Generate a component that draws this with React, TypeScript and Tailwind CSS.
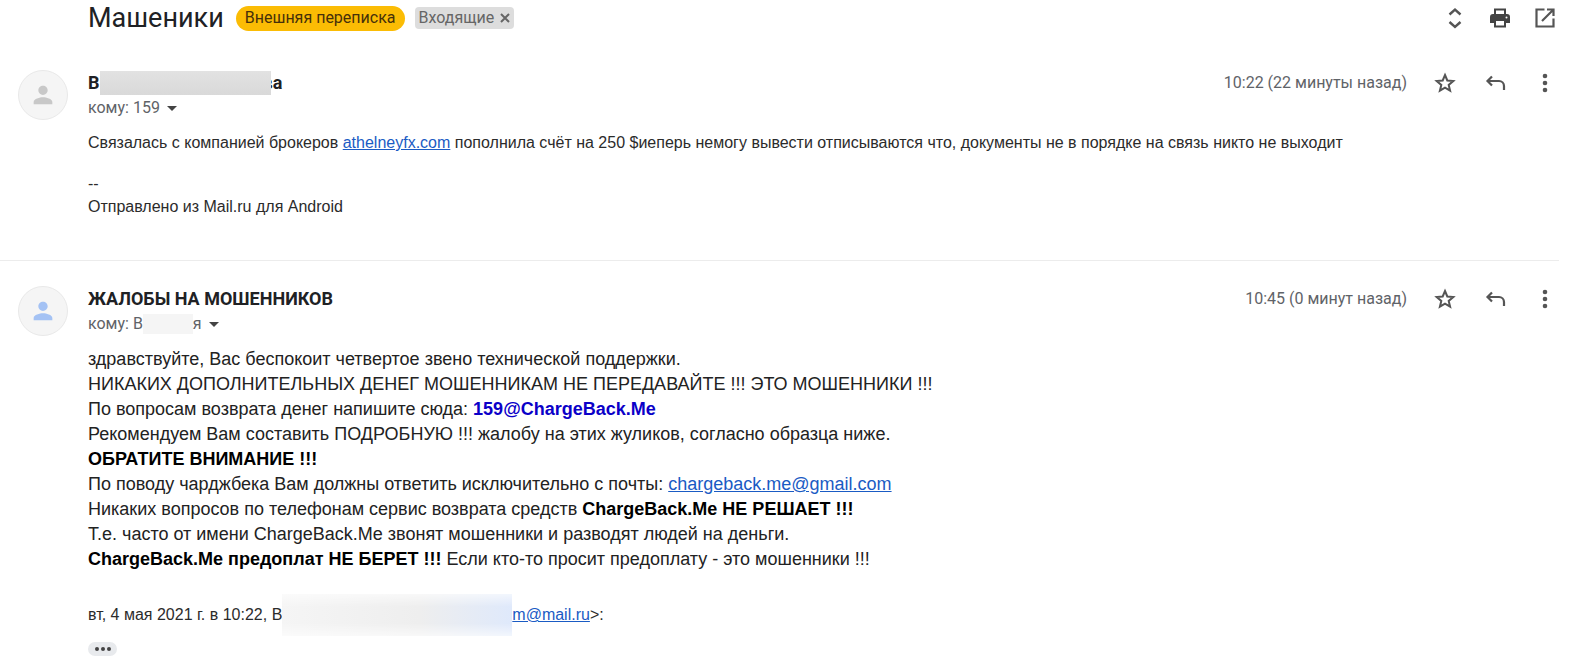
import type { ReactNode } from 'react'
import { MdArrowDropDown, MdPerson } from 'react-icons/md'

function ExpandIcon() {
  return (
    <svg viewBox="0 0 24 24" className="h-6 w-6" fill="none" stroke="currentColor" strokeWidth="2.4">
      <path d="m6.500 8.500 5.500-5 5.500 5M6.500 16l5.500 5 5.500-5" />
    </svg>
  )
}

function PrintIcon() {
  return (
    <svg viewBox="0 0 24 24" className="h-6 w-6 text-[#444]" fill="currentColor">
      <path
        fillRule="evenodd"
        d="M6 2.500h12V8h1a3 3 0 0 1 3 3v6h-4v4.500H6V17H2v-6a3 3 0 0 1 3-3h1V2.500Zm2 2V8h8V4.500H8ZM8 15v4.500h8V15H8Z"
      />
      <circle cx="18.500" cy="11.500" r="1" fill="#fff" />
    </svg>
  )
}

function OpenIcon() {
  return (
    <svg viewBox="0 0 24 24" className="h-6 w-6" fill="none" stroke="currentColor" strokeWidth="2.200">
      <path d="M11.500 3.500h-8v17h17v-8M14 3.500h6.500V10M20 4 9 15" />
    </svg>
  )
}

function StarIcon() {
  return (
    <svg viewBox="0 0 24 24" className="h-6 w-6" fill="none" stroke="currentColor" strokeWidth="2">
      <path d="m12 4 2.300 5.500 6 .5-4.600 3.900 1.400 5.800L12 16.600l-5.100 3.100 1.400-5.800L3.700 10l6-.5L12 4Z" />
    </svg>
  )
}

function ReplyIcon() {
  return (
    <svg viewBox="0 0 24 24" className="h-6 w-6" fill="none" stroke="currentColor" strokeWidth="2.200">
      <path d="M9 5.500 4.500 10 9 14.500M4.500 10H16a5 5 0 0 1 5 5v4" />
    </svg>
  )
}

function MoreIcon() {
  return (
    <svg viewBox="0 0 24 24" className="h-6 w-6" fill="currentColor">
      <circle cx="12" cy="5" r="2.300" />
      <circle cx="12" cy="12" r="2.300" />
      <circle cx="12" cy="19" r="2.300" />
    </svg>
  )
}

function IconButton({ label, children }: { label: string; children: ReactNode }) {
  return (
    <button type="button" aria-label={label} className="flex h-6 w-6 items-center justify-center text-[#555]">
      {children}
    </button>
  )
}

type MessageProps = {
  sender: ReactNode
  recipient: ReactNode
  time: string
  avatarClass: string
  children: ReactNode
}

function Message({ sender, recipient, time, avatarClass, children }: MessageProps) {
  return (
    <article className="flex pl-[18px]">
      <div className="flex h-[50px] w-[50px] shrink-0 items-center justify-center rounded-full border border-[#e9e9e9] bg-[#f5f5f5]">
        <MdPerson className={avatarClass} />
      </div>
      <div className="ml-5 min-w-0 flex-1">
        <div className="flex h-[26px] items-center justify-between pr-[19px]">
          <h2 className="flex items-center text-lg leading-6 font-bold text-[#202124]">{sender}</h2>
          <div className="flex items-center">
            <span className="mr-[26px] text-base text-[#5f6368]">{time}</span>
            <div className="flex gap-[26px]">
              <IconButton label="Пометить">
                <StarIcon />
              </IconButton>
              <IconButton label="Ответить">
                <ReplyIcon />
              </IconButton>
              <IconButton label="Ещё">
                <MoreIcon />
              </IconButton>
            </div>
          </div>
        </div>
        <button type="button" className="flex h-6 items-center text-base text-[#5f6368]">
          {recipient}
          <MdArrowDropDown size={24} className="text-[#444]" />
        </button>
        {children}
      </div>
    </article>
  )
}

export default function App() {
  return (
    <main className="min-h-screen bg-white pb-2 font-['Roboto',sans-serif]">
      <header className="flex h-9 items-center justify-between pr-[19px] pl-[88px]">
        <div className="flex items-center">
          <h1 className="text-[27px] leading-9 text-[#202124]">Машеники</h1>
          <span className="ml-3 flex h-[25px] items-center rounded-full bg-[#fbbc04] px-[9px] text-base text-[#46300a]">
            Внешняя переписка
          </span>
          <span className="ml-2.5 flex h-[22px] items-center gap-1.5 rounded bg-[#ddd] px-1 text-base text-[#666]">
            Входящие
            <button type="button" aria-label="Удалить ярлык">
              <svg viewBox="0 0 10 10" className="h-2.5 w-2.5" stroke="currentColor" strokeWidth="2">
                <path d="m1 1 8 8M9 1 1 9" />
              </svg>
            </button>
          </span>
        </div>
        <div className="flex gap-[21px]">
          <IconButton label="Развернуть все">
            <ExpandIcon />
          </IconButton>
          <IconButton label="Печать">
            <PrintIcon />
          </IconButton>
          <IconButton label="Открыть в новом окне">
            <OpenIcon />
          </IconButton>
        </div>
      </header>

      <div className="pt-[34px]">
        <Message
          sender={
            <>
              В
              <span className="z-10 -mr-2 h-6 w-[171px] bg-linear-to-b from-[#e2e2e2] to-[#d9d9d9]" />
              ва
            </>
          }
          recipient="кому: 159"
          time="10:22 (22 минуты назад)"
          avatarClass="h-7 w-7 text-[#c8c8c8]"
        >
          <div className="pt-[11px] font-['Liberation_Sans',Arial,sans-serif] text-base leading-[23px] text-[#2b2b2b]">
            <p>
              Связалась с компанией брокеров{' '}
              <a href="#" className="text-[#1a5bc4] underline">
                athelneyfx.com
              </a>{' '}
              пополнила счёт на 250 $иеперь немогу вывести отписываются что, документы не в порядке на связь никто не выходит
            </p>
            <p className="pt-[18px]">--</p>
            <p>Отправлено из Mail.ru для Android</p>
          </div>
        </Message>
      </div>

      <hr className="mt-[42px] mr-[17px] border-[#ececec]" />

      <div className="pt-[25px]">
        <Message
          sender="ЖАЛОБЫ НА МОШЕННИКОВ"
          recipient={
            <>
              кому: В
              <span className="h-5 w-[50px] bg-[#f5f5f5]" />я
            </>
          }
          time="10:45 (0 минут назад)"
          avatarClass="h-7 w-7 text-[#a4c2f4]"
        >
          <div className="pt-[11px] font-['Liberation_Sans',Arial,sans-serif] text-lg leading-[25px] text-[#222]">
            <p>здравствуйте, Вас беспокоит четвертое звено технической поддержки.</p>
            <p>НИКАКИХ ДОПОЛНИТЕЛЬНЫХ ДЕНЕГ МОШЕННИКАМ НЕ ПЕРЕДАВАЙТЕ !!! ЭТО МОШЕННИКИ !!!</p>
            <p>
              По вопросам возврата денег напишите сюда: <b className="text-[#0b00c8]">159@ChargeBack.Me</b>
            </p>
            <p>Рекомендуем Вам составить ПОДРОБНУЮ !!! жалобу на этих жуликов, согласно образца ниже.</p>
            <p className="font-bold text-black">ОБРАТИТЕ ВНИМАНИЕ !!!</p>
            <p>
              По поводу чарджбека Вам должны ответить исключительно с почты:{' '}
              <a href="#" className="text-[#1a5bc4] underline">
                chargeback.me@gmail.com
              </a>
            </p>
            <p>
              Никаких вопросов по телефонам сервис возврата средств{' '}
              <b className="text-black">ChargeBack.Me НЕ РЕШАЕТ !!!</b>
            </p>
            <p>Т.е. часто от имени ChargeBack.Me звонят мошенники и разводят людей на деньги.</p>
            <p>
              <b className="text-black">ChargeBack.Me предоплат НЕ БЕРЕТ !!!</b> Если кто-то просит предоплату - это мошенники !!!
            </p>
          </div>
          <div className="mt-[22px] flex h-[42px] items-center font-['Liberation_Sans',Arial,sans-serif] text-base text-[#2b2b2b]">
            вт, 4 мая 2021 г. в 10:22, В
            <span className="h-full w-[230px] bg-linear-to-r from-[#f5f5f5] via-[#eeeeee] via-60% to-[#dfe9fb] mask-y-from-70% mask-y-to-120%" />
            <a href="#" className="text-[#1a5bc4] underline">
              m@mail.ru
            </a>
            &gt;:
          </div>
          <button
            type="button"
            aria-label="Показать скрытый текст"
            className="mt-1.5 flex h-3.5 w-[29px] items-center justify-center gap-0.5 rounded-full bg-[#e8eaed]"
          >
            <span className="h-1 w-1 rounded-full bg-[#444]" />
            <span className="h-1 w-1 rounded-full bg-[#444]" />
            <span className="h-1 w-1 rounded-full bg-[#444]" />
          </button>
        </Message>
      </div>
    </main>
  )
}
